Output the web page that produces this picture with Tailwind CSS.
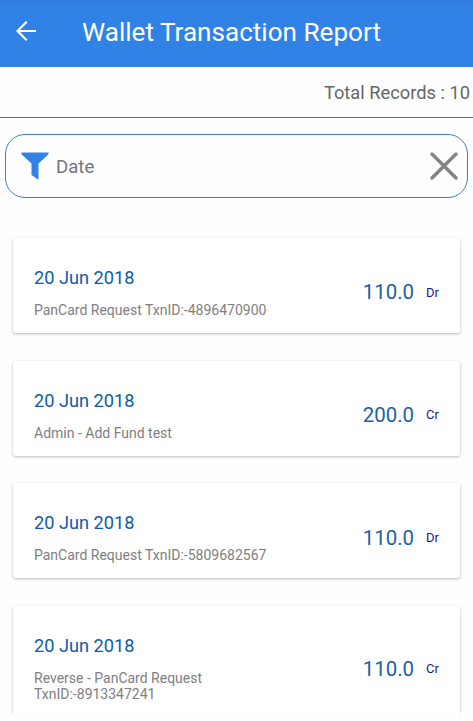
<!DOCTYPE html>
<html lang="en">
<head>
<meta charset="utf-8">
<title>Wallet Transaction Report</title>
<script src="https://cdn.jsdelivr.net/npm/@tailwindcss/browser@4"></script>
</head>
<body class="bg-[#fefefe] font-['Roboto',sans-serif] overflow-hidden">
<div class="w-[473px] h-[713px] flex flex-col overflow-hidden">
  <header class="h-[67px] shrink-0 bg-linear-to-b from-[#2f7cdd] to-[#3182e6] to-15% flex items-center pl-4 pb-[3px] text-white">
    <svg class="w-5 h-5 -mt-0.5" viewBox="0 0 20 20" fill="none" stroke="currentColor" stroke-width="2.2"><path d="M20 10H2M10.7 .8 1.5 10l9.2 9.2"/></svg>
    <h1 class="ml-[46px] text-[26.1px] leading-8 whitespace-nowrap">Wallet Transaction Report</h1>
  </header>
  <div class="h-[51px] shrink-0 border-b border-[#6a6a6a] flex items-center justify-end pr-[3px] pt-px text-[18.3px] text-[#666]">Total Records : 10</div>
  <div class="mt-4 ml-[5px] mr-[5px] h-16 shrink-0 rounded-[20px] border border-[#3d7fc0] flex items-center pl-[15px] pr-[9px]">
    <svg class="w-7 h-7" viewBox="0 0 28 28" fill="#3182e6"><path d="M.5 .5h27v1.8L17.5 11.5v16.3L10.5 23V11.5L.5 2.3z"/></svg>
    <span class="ml-[7px] pt-[3px] text-[18.6px] text-[#757575] flex-1">Date</span>
    <svg class="w-7 h-7" viewBox="0 0 28 28" fill="none" stroke="#808387" stroke-width="3.4" stroke-linecap="round"><path d="M2 2l24 24M26 2 2 26"/></svg>
  </div>
  <main class="pt-10 pl-[13px] pr-[13px] flex flex-col gap-[27.5px]">
    <article class="h-[95px] shrink-0 bg-white rounded-[3px] shadow-[0_1px_3px_rgba(0,0,0,0.28)] flex items-center pl-[21px] pr-5">
      <div class="flex-1 pt-[13px]"><h2 class="text-[18.2px] leading-6 text-[#0f5ba8]">20 Jun 2018</h2><p class="mt-3 text-[14px] leading-4 text-[#808080]">PanCard Request TxnID:-4896470900</p></div>
      <span class="text-[20.4px] text-[#1a62a5] mt-3.5">110.0</span><span class="w-[14px] ml-3 text-[13px] text-[#18189a] mt-3.5">Dr</span>
    </article>
    <article class="h-[95px] shrink-0 bg-white rounded-[3px] shadow-[0_1px_3px_rgba(0,0,0,0.28)] flex items-center pl-[21px] pr-5">
      <div class="flex-1 pt-[13px]"><h2 class="text-[18.2px] leading-6 text-[#0f5ba8]">20 Jun 2018</h2><p class="mt-3 text-[14px] leading-4 text-[#808080]">Admin - Add Fund test</p></div>
      <span class="text-[20.4px] text-[#1a62a5] mt-3.5">200.0</span><span class="w-[14px] ml-3 text-[13px] text-[#18189a] mt-3.5">Cr</span>
    </article>
    <article class="h-[95px] shrink-0 bg-white rounded-[3px] shadow-[0_1px_3px_rgba(0,0,0,0.28)] flex items-center pl-[21px] pr-5">
      <div class="flex-1 pt-[13px]"><h2 class="text-[18.2px] leading-6 text-[#0f5ba8]">20 Jun 2018</h2><p class="mt-3 text-[14px] leading-4 text-[#808080]">PanCard Request TxnID:-5809682567</p></div>
      <span class="text-[20.4px] text-[#1a62a5] mt-4">110.0</span><span class="w-[14px] ml-3 text-[13px] text-[#18189a] mt-3.5">Dr</span>
    </article>
    <article class="h-[111px] shrink-0 bg-white rounded-[3px] shadow-[0_1px_3px_rgba(0,0,0,0.28)] flex items-center pl-[21px] pr-5">
      <div class="flex-1 pt-[13px]"><h2 class="text-[18.2px] leading-6 text-[#0f5ba8]">20 Jun 2018</h2><p class="mt-3 text-[14px] leading-4 text-[#808080]">Reverse - PanCard Request<br>TxnID:-8913347241</p></div>
      <span class="text-[20.4px] text-[#1a62a5] mt-4">110.0</span><span class="w-[14px] ml-3 text-[13px] text-[#18189a] mt-4">Cr</span>
    </article>
  </main>
</div>
</body>
</html>
